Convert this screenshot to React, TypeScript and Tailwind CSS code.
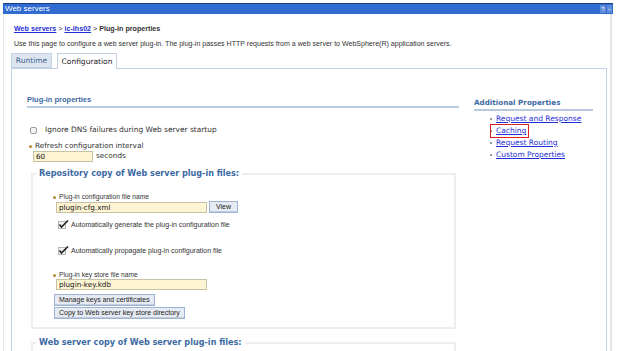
import React from "react";

const sans = { fontFamily: '"Liberation Sans", Arial, sans-serif' };
const deja = { fontFamily: '"DejaVu Sans", Verdana, sans-serif' };

function Req() {
  return <span className="inline-block h-[3px] w-[3px] rounded-full bg-[#b08a2a] mr-[3px] align-middle" />;
}

function Check() {
  return (
    <svg width="11" height="9" viewBox="0 0 11 9" className="mr-[2px]">
      <rect x="0.5" y="1.5" width="7" height="7" fill="#f3f3f3" stroke="#b5b5b5" />
      <path d="M1.5 4.5 L3.5 7 L10 0.5" fill="none" stroke="#222" strokeWidth="1.6" />
    </svg>
  );
}

function Btn({ children, wide }: { children: React.ReactNode; wide?: boolean }) {
  return (
    <button
      type="button"
      className={`border border-[#9db3d4] bg-[#e6ebf3] ${wide ? "px-[6px]" : "px-[4px]"} h-[12px] leading-[10px] text-[7px] text-[#222] shadow-[inset_0_-1px_0_#c2cde0]`}
      style={sans}
    >
      {children}
    </button>
  );
}

function Input({ value, w }: { value: string; w: string }) {
  return (
    <div className={`${w} h-[11px] border border-[#c7c2a4] bg-[#fdf4d4] pl-[2px] text-[7.2px] leading-[9px] text-[#111]`} style={deja}>
      {value}
    </div>
  );
}

export default function App() {
  return (
    <div className="w-[624px] h-[351px] overflow-hidden bg-white" style={sans}>
      <div className="ml-[3px] mr-[11px] mt-[3px] h-[11px] bg-[#2f6bd0] border-t border-[#1a3f80] flex items-center justify-between">
        <span className="text-[8px] leading-[10px] text-white pl-[2px]">Web servers</span>
        <div className="flex items-center gap-[1px] pr-[1px]">
          <span className="h-[8px] w-[6px] bg-[#5b8ad8] text-[6px] leading-[8px] text-center text-white">?</span>
          <span className="h-[8px] w-[5px] bg-[#5b8ad8] text-[6px] leading-[8px] text-center text-white">–</span>
        </div>
      </div>

      <div className="flex h-[337px]">
        <div className="w-[609px] border-r-[2px] border-[#e3e3e3] pl-[7px] pt-[10px] border-l border-l-[#e6e6e6] ml-[3px]">
          <div className="text-[7.15px] font-bold text-[#333] leading-[10px] pl-[3px]">
            <span className="text-[#1f2fd6] underline">Web servers</span>
            <span className="font-normal"> &gt; </span>
            <span className="text-[#1f2fd6] underline">ic-ihs02</span>
            <span className="font-normal"> &gt; </span>
            Plug-in properties
          </div>
          <div className="mt-[5px] text-[7.05px] leading-[10px] text-[#333] pl-[3px]">
            Use this page to configure a web server plug-in. The plug-in passes HTTP requests from a web server to WebSphere(R) application servers.
          </div>

          <div className="mt-[3px] flex items-end gap-[5px] h-[16px]" style={deja}>
            <div className="h-[15px] w-[41px] border border-[#c3d0e3] bg-[#dde5ef] text-[7.5px] leading-[14px] text-center text-[#3a5f93]">Runtime</div>
            <div className="h-[16px] w-[60px] border border-b-0 border-[#c3d0e3] bg-white text-[7.5px] leading-[15px] text-center text-[#222] relative top-[1px]">Configuration</div>
          </div>

          <div className="w-[596px] h-[300px] border border-[#c3d0e3] flex">
            <div className="w-[447px] pl-[15px] pt-[26px]">
              <div className="text-[7.5px] font-bold text-[#3d6aa3] leading-[10px] border-b-[2px] border-[#b8c8de] w-[432px] pb-[1px]">Plug-in properties</div>

              <div className="mt-[17px] flex items-center pl-[3px]" style={deja}>
                <span className="h-[7px] w-[7px] rounded-[2px] border border-[#9a9a9a] bg-[#f4f4f4] mr-[8px]" />
                <span className="text-[7.45px] text-[#333] leading-[10px]">Ignore DNS failures during Web server startup</span>
              </div>

              <div className="mt-[6px] pl-[2px] text-[7.3px] leading-[9px] text-[#333]" style={deja}>
                <Req />Refresh configuration interval
              </div>
              <div className="flex items-center pl-[6px] mt-[1px]">
                <Input value="60" w="w-[60px]" />
                <span className="ml-[3px] text-[7.3px] text-[#333]" style={deja}>seconds</span>
              </div>

              <div className="mt-[11px] ml-[4px] w-[425px] border-[2px] border-[#eeeeee] h-[156px] relative pl-[20px] pt-[17px]">
                <span className="absolute -top-[7px] left-[3px] bg-white px-[3px] text-[8.1px] font-bold text-[#3d6aa3] leading-[11px]" style={deja}>
                  Repository copy of Web server plug-in files:
                </span>
                <div className="text-[6.7px] leading-[9px] text-[#333]"><Req />Plug-in configuration file name</div>
                <div className="flex items-center pl-[3px] gap-[2px]">
                  <Input value="plugin-cfg.xml" w="w-[151px]" />
                  <Btn wide>View</Btn>
                </div>
                <div className="mt-[7px] pl-[5px] flex items-end text-[7px] text-[#333] leading-[9px]">
                  <Check />Automatically generate the plug-in configuration file
                </div>
                <div className="mt-[17px] pl-[5px] flex items-end text-[7px] text-[#333] leading-[9px]">
                  <Check />Automatically propagate plug-in configuration file
                </div>
                <div className="mt-[15px] text-[6.7px] leading-[9px] text-[#333]"><Req />Plug-in key store file name</div>
                <div className="pl-[3px]">
                  <Input value="plugin-key.kdb" w="w-[151px]" />
                </div>
                <div className="mt-[4px] flex flex-col items-start gap-[1px] pl-[1px]">
                  <Btn>Manage keys and certificates</Btn>
                  <Btn>Copy to Web server key store directory</Btn>
                </div>
              </div>

              <div className="mt-[13px] ml-[4px] w-[425px] border-t-[2px] border-x-[2px] border-[#eeeeee] h-[20px] relative">
                <span className="absolute -top-[7px] left-[3px] bg-white px-[3px] text-[8.1px] font-bold text-[#3d6aa3] leading-[11px]" style={deja}>
                  Web server copy of Web server plug-in files:
                </span>
              </div>
            </div>

            <div className="pl-[15px] pt-[29px]">
              <div className="w-[119px] border-b-[2px] border-[#b8c8de] text-[7.2px] font-bold text-[#3d6aa3] leading-[10px] pb-[1px]" style={deja}>
                Additional Properties
              </div>
              <div className="mt-[2px] pl-[16px] flex flex-col text-[7.5px] leading-[12px]" style={deja}>
                {["Request and Response", "Caching", "Request Routing", "Custom Properties"].map((t) => (
                  <div key={t} className="flex items-center">
                    <span className="h-[2px] w-[2px] bg-[#999] mr-[4px]" />
                    <span className={t === "Caching" ? "text-[#1f2fd6] underline outline outline-[1.5px] outline-[#e02020] -ml-[5px] pl-[5px] pr-[2px]" : "text-[#1f2fd6] underline"}>{t}</span>
                  </div>
                ))}
              </div>
            </div>
          </div>
        </div>
      </div>
    </div>
  );
}
